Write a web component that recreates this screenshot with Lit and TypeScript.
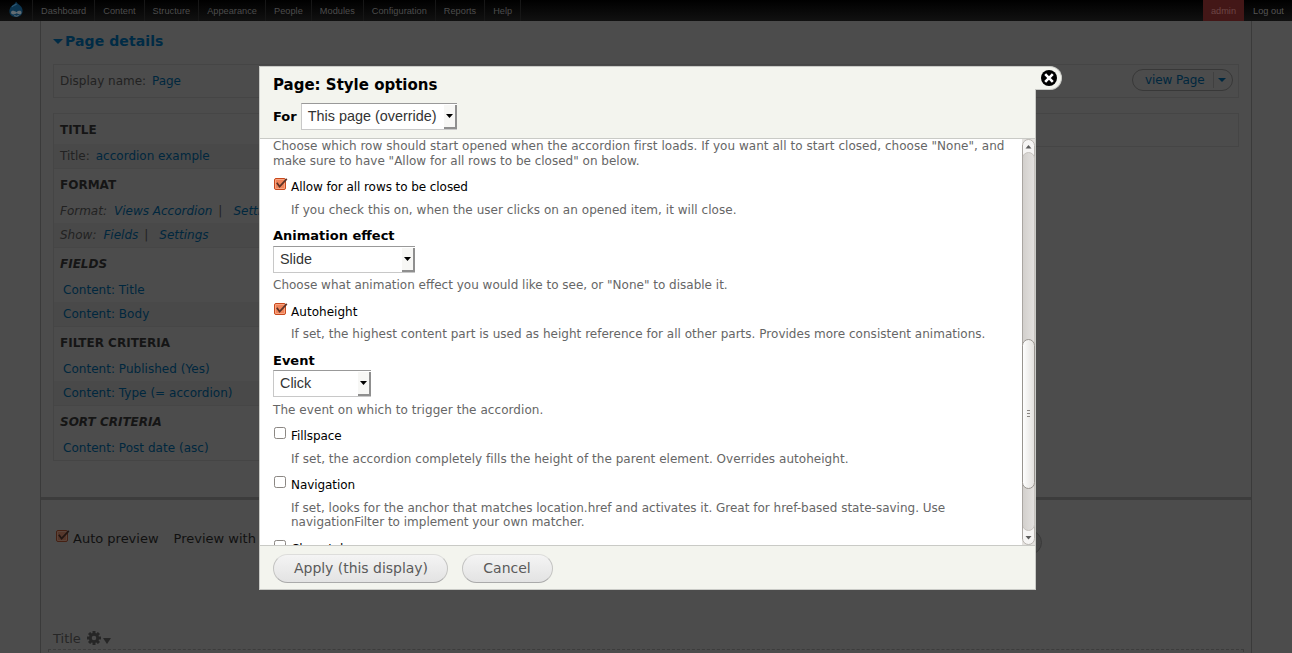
import { LitElement, html, css, svg, nothing } from "lit";
import { customElement, property } from "lit/decorators.js";

const NAV = ["Dashboard", "Content", "Structure", "Appearance", "People", "Modules", "Configuration", "Reports", "Help"];

type Row = { label?: string; links: string[]; zebra?: boolean; changed?: boolean };
type Bucket = { title: string; changed?: boolean; rows: Row[] };

const BUCKETS: Bucket[] = [
  { title: "TITLE", rows: [{ label: "Title:", links: ["accordion example"], zebra: true }] },
  {
    title: "FORMAT",
    rows: [
      { label: "Format:", links: ["Views Accordion", "Settings"], changed: true },
      { label: "Show:", links: ["Fields", "Settings"], zebra: true, changed: true },
    ],
  },
  { title: "FIELDS", changed: true, rows: [{ links: ["Content: Title"] }, { links: ["Content: Body"], zebra: true }] },
  { title: "FILTER CRITERIA", rows: [{ links: ["Content: Published (Yes)"] }, { links: ["Content: Type (= accordion)"], zebra: true }] },
  { title: "SORT CRITERIA", changed: true, rows: [{ links: ["Content: Post date (asc)"] }] },
];

@customElement("check-box")
class CheckBox extends LitElement {
  @property({ type: Boolean }) checked = false;
  static styles = css`
    :host { display: block; width: 15px; height: 13px; flex: none; }
    svg { display: block; overflow: visible; }
  `;
  render() {
    return html`<svg width="15" height="13" viewBox="0 0 15 13">
      ${this.checked
        ? svg`<rect x=".5" y=".5" width="11" height="11" rx="1.5" fill="#f0845a" stroke="#c8481c"/>
            <rect x="1.5" y="1.5" width="9" height="9" rx=".5" fill="none" stroke="#f9a582" stroke-width="1"/>
            <path d="M2.8 4.8L5.6 8.6L12.8 .8" fill="none" stroke="#5d3428" stroke-width="1.7"/>`
        : svg`<rect x=".5" y=".5" width="11" height="11" rx="1.8" fill="#fff" stroke="#8b8783"/>`}
    </svg>`;
  }
}

@customElement("select-box")
class SelectBox extends LitElement {
  @property() value = "";
  static styles = css`
    :host {
      display: flex; box-sizing: border-box; height: 27px; background: #fff;
      border: 1px solid #c8c8c8; border-top-color: #999; border-right: 0;
      font: 14.4px/25px "Liberation Sans", Arial, sans-serif; color: #333;
    }
    .value { flex: 1; padding-left: 6px; white-space: nowrap; }
    .drop {
      box-sizing: border-box; width: 13px; height: 24px; margin-top: 1px; background: #f7f7f5;
      border-right: 2px solid #8f8f8f; border-bottom: 2px solid #8f8f8f; display: flex;
      justify-content: center; padding-top: 9px;
    }
    svg { display: block; }
  `;
  render() {
    return html`<span class="value">${this.value}</span>
      <span class="drop"><svg width="7" height="4"><path d="M0 0H7L3.5 4Z" fill="#000"/></svg></span>`;
  }
}

@customElement("scroll-bar")
class ScrollBar extends LitElement {
  static styles = css`
    :host { display: block; width: 13px; height: 406px; flex: none; }
    svg { display: block; }
  `;
  render() {
    return html`<svg width="13" height="406" viewBox="0 0 13 406">
      <defs>
        <linearGradient id="track"><stop offset="0" stop-color="#d2cfcc"/><stop offset="1" stop-color="#e4e2e0"/></linearGradient>
        <linearGradient id="thumb"><stop offset="0" stop-color="#fff"/><stop offset="1" stop-color="#e2e0dd"/></linearGradient>
      </defs>
      <rect width="13" height="406" fill="#e4e2df"/>
      <rect x=".5" y=".5" width="12" height="405" rx="6" fill="#f6f5f4" stroke="#b9b5b1"/>
      <rect x=".5" y="13.5" width="12" height="378" rx="6" fill="url(#track)" stroke="#c6c2be"/>
      <path d="M.5 6V400" stroke="#aaa6a2"/>
      <rect x=".5" y="200.500" width="12" height="149" rx="6" fill="url(#thumb)" stroke="#98948f"/>
      <path d="M5 271.500H8M5 274.500H8M5 277.500H8" stroke="#8a8682"/>
      <path d="M3.500 9.500H9.500L6.500 6Z" fill="#5c5c5c"/>
      <path d="M3.500 397H9.500L6.500 400.500Z" fill="#5c5c5c"/>
    </svg>`;
  }
}

@customElement("app-root")
class AppRoot extends LitElement {
  static styles = css`
    :host {
      display: block; position: relative; width: 1292px; height: 653px; overflow: hidden;
      background: #4c4c4c; font: 12px/15px "DejaVu Sans", sans-serif; color: #222; white-space: nowrap;
    }
    * { box-sizing: border-box; }
    .toolbar {
      display: flex; height: 21px; background: linear-gradient(#000, #111);
      font: 9.2px/22px "Liberation Sans", Arial, sans-serif; color: #4d4d4d; letter-spacing: .03px;
    }
    .home { width: 33px; padding: 1px 0 0 8px; border-right: 1px solid #161616; }
    .home svg { display: block; }
    .tab { padding: 0 8px; border-right: 1px solid #161616; }
    .spacer { flex: 1; }
    .user { width: 41px; text-align: center; background: #431717; color: #6d4646; }
    .logout { width: 48px; padding-left: 9px; color: #555; }
    .page {
      margin: 0 40px; height: 632px; border: 1px solid #3a3a3a; border-width: 0 1px;
      display: flex; flex-direction: column; width: 1212px;
    }
    .details { height: 476px; padding: 11px 12px 0; }
    .summary { display: flex; align-items: center; height: 18px; font-weight: bold; font-size: 14px; color: #002b45; letter-spacing: .1px; }
    .summary svg { margin-right: 2px; }
    .link { color: #00273e; }
    .display {
      display: flex; justify-content: space-between; margin-top: 14px; width: 1186px; height: 34px;
      border: 1px solid #454545; padding: 4px 5px 0 6px; line-height: 24px;
    }
    .display .link { margin-left: 2px; }
    .view {
      display: flex; width: 101px; height: 22px; border: 1px solid #383838; border-radius: 11px;
      padding-left: 12px; line-height: 21px; color: #00273e; letter-spacing: -.1px;
    }
    .view .caret { margin: 2px 0 0 auto; width: 19px; height: 16px; border-left: 1px solid #404040; padding: 6px 0 0 4px; }
    .view svg { display: block; }
    .columns { display: grid; grid-template-columns: 1fr 1fr 1fr; gap: 14px; width: 1186px; margin-top: 15px; align-items: start; }
    .column { border: 1px solid #454545; border-top: 0; }
    .column.blank { height: 34px; border-top: 1px solid #454545; }
    .bucket-title { height: 31px; padding: 2px 6px 0; border-top: 1px solid #464646; line-height: 28px; font-weight: bold; color: #151515; }
    .row { height: 24px; line-height: 24px; padding: 0 6px; display: flex; }
    .row.plain { padding-left: 9px; letter-spacing: .03px; }
    .zebra { background: #494949; }
    .changed { font-style: italic; }
    .row .name { margin-right: 6px; }
    .row.changed .name { margin-right: 7px; }
    .bar { margin: 0 11px 0 6px; }
    .preview { border-top: 3px solid #3c3c3c; height: 156px; padding: 30px 7px 0; }
    .options { display: flex; height: 25px; line-height: 18px; font-size: 13px; color: #111; padding-left: 8px; }
    .options check-box { filter: brightness(.4) saturate(.7); margin: 0 2px 0 0; }
    .options .with { margin-left: 15px; }
    .update { margin-left: auto; margin-right: 202px; width: 128px; border: 1px solid #3a3a3a; border-radius: 13px; background: #464646; }
    .view-title { display: flex; margin-top: 75px; height: 18px; line-height: 18px; font-size: 13px; color: #262626; padding-left: 5px; }
    .gear { margin: 1px 0 0 6px; }
    .more { margin: 8px 0 0 2px; }
    .region { height: 20px; margin-top: 1px; border: 1px dashed #3c3c3c; width: 1196px; }
    .dialog {
      position: absolute; left: 259px; top: 66px; width: 777px; height: 524px; background: #fff;
      border: 1px solid #c9cac6; display: flex; flex-direction: column; color: #000;
    }
    .close {
      position: absolute; left: 1035px; top: 66px; width: 27px; height: 24px; background: #f3f4ee;
      border: 1px solid #c9cac6; border-left: 0; border-radius: 0 12px 12px 0; padding: 3px 0 0 6px;
    }
    .close svg { display: block; }
    .head { height: 72px; flex: none; background: #f3f4ee; border-bottom: 1px solid #c9cac6; padding: 8px 13px 0; }
    .title { font-size: 15px; line-height: 20px; font-weight: bold; }
    .for { display: flex; margin-top: 8px; font-size: 13px; line-height: 27px; font-weight: bold; }
    .for select-box { width: 156px; margin-left: 4px; }
    .scroll { height: 406px; flex: none; display: flex; overflow: hidden; }
    .form { flex: 1; padding-left: 13px; }
    .desc { line-height: 15px; color: #666; }
    .wide { letter-spacing: .04px; }
    .item { margin-top: 10px; }
    .item .label { display: flex; height: 16px; line-height: 16px; letter-spacing: -.07px; }
    .item .label check-box { margin: -1px 2px 0 1px; }
    .item .desc { margin: 8px 0 0 18px; }
    .pick { margin-top: 10px; }
    .pick .label { height: 18px; font-size: 13px; line-height: 16px; font-weight: bold; }
    .pick .desc { margin-top: 5px; }
    .tight .item, .tight .pick { margin-top: 11px; }
    .tight .item .label { letter-spacing: .04px; }
    .tight .item .desc { margin-top: 7px; letter-spacing: .02px; }
    .tight .pick .label { height: 17px; }
    .tight .pick .desc { margin-top: 6px; letter-spacing: .06px; }
    .two-lines .item .desc { line-height: 14px; height: 30px; }
    .w-slide { width: 142px; }
    .w-click { width: 98px; }
    .foot { flex: 1; background: #f3f4ee; border-top: 1px solid #c9cac6; padding: 8px 13px 0; display: flex; gap: 14px; }
    .btn {
      height: 29px; border: 1px solid; border-color: #dddddb #c4c4c2 #aaa #c4c4c2; border-radius: 15px;
      background: linear-gradient(#f4f4f4, #e3e3e3); font-size: 14px; line-height: 27px; color: #5a5a5a; text-align: center;
    }
    .apply { width: 175px; padding-left: 1px; letter-spacing: -.03px; }
    .cancel { width: 91px; padding-right: 1px; }
  `;

  row(r: Row) {
    return html`<div class="row ${r.zebra ? "zebra" : ""} ${r.changed ? "changed" : ""} ${r.label ? "" : "plain"}">
      ${r.label ? html`<span class="name">${r.label}</span>` : nothing}
      ${r.links.map((l, i) => html`${i ? html`<span class="bar">|</span>` : nothing}<span class="link">${l}</span>`)}
    </div>`;
  }

  item(label: string, checked: boolean, desc: unknown, wide = false) {
    return html`<div class="item">
      <div class="label"><check-box ?checked=${checked}></check-box><span>${label}</span></div>
      <div class="desc ${wide ? "wide" : ""}">${desc}</div>
    </div>`;
  }

  render() {
    const teeth = [0, 45, 90, 135, 180, 225, 270, 315];
    return html`
      <div class="toolbar">
        <div class="home">
          <svg width="16" height="17" viewBox="0 0 16 17">
            <path d="M8 .5C9 2.600 11.200 3.300 12.800 5.200C16.400 9.500 14.500 15.900 8 16C1.500 15.900 -.4 9.800 3.200 5.500C4.900 3.500 7.600 3 8 .5Z" fill="#0c3550"/>
            <path d="M4 5.800C5.600 4.200 7.500 4 8.500 3" stroke="#2f5a76" stroke-width="1.200" fill="none"/>
            <path d="M3 11.500C3 9 6.500 9.500 8.500 11.200C10.500 9.300 13.500 9.200 13.500 11.600C13.500 14.200 10.700 13.500 8.700 12.300C6.700 13.800 3 14 3 11.500Z" fill="#626c72"/>
            <path d="M6.200 14.600Q8.600 15.900 10.700 14.500" stroke="#626c72" fill="none"/>
          </svg>
        </div>
        ${NAV.map((n) => html`<span class="tab">${n}</span>`)}
        <span class="spacer"></span><span class="user">admin</span><span class="logout">Log out</span>
      </div>
      <div class="page">
        <div class="details">
          <div class="summary"><svg width="10" height="5"><path d="M0 0H10L5 5Z" fill="#002b45"/></svg>Page details</div>
          <div class="display">
            <div>Display name: <span class="link">Page</span></div>
            <div class="view">view Page<span class="caret"><svg width="8" height="4"><path d="M0 0H8L4 4Z" fill="#00273e"/></svg></span></div>
          </div>
          <div class="columns">
            <div class="column">
              ${BUCKETS.map((b) => html`<div class="bucket-title ${b.changed ? "changed" : ""}">${b.title}</div>${b.rows.map((r) => this.row(r))}`)}
            </div>
            <div class="column blank"></div>
            <div class="column blank"></div>
          </div>
        </div>
        <div class="preview">
          <div class="options"><check-box checked></check-box><span>Auto preview</span><span class="with">Preview with</span><span class="update"></span></div>
          <div class="view-title">Title
            <svg class="gear" width="14" height="14" viewBox="-7 -7 14 14">
              ${teeth.map((a) => svg`<rect x="-1.500" y="-7" width="3" height="4" fill="#262626" transform="rotate(${a})"/>`)}
              <circle r="3.700" fill="none" stroke="#262626" stroke-width="2.800"/>
            </svg>
            <svg class="more" width="8" height="6"><path d="M0 0H8L4 6Z" fill="#262626"/></svg>
          </div>
          <div class="region"></div>
        </div>
      </div>
      <div class="dialog">
        <div class="head">
          <div class="title">Page: Style options</div>
          <div class="for">For<select-box value="This page (override)"></select-box></div>
        </div>
        <div class="scroll">
          <div class="form">
            <div class="desc"><span class="wide">Choose which row should start opened when the accordion first loads. If you want all to start closed, choose "None", and</span><br>make sure to have "Allow for all rows to be closed" on below.</div>
            ${this.item("Allow for all rows to be closed", true, "If you check this on, when the user clicks on an opened item, it will close.", true)}
            <div class="pick"><div class="label">Animation effect</div><select-box class="w-slide" value="Slide"></select-box>
              <div class="desc">Choose what animation effect you would like to see, or "None" to disable it.</div></div>
            <div class="tight">
              ${this.item("Autoheight", true, "If set, the highest content part is used as height reference for all other parts. Provides more consistent animations.")}
              <div class="pick"><div class="label">Event</div><select-box class="w-click" value="Click"></select-box>
                <div class="desc">The event on which to trigger the accordion.</div></div>
            </div>
            ${this.item("Fillspace", false, "If set, the accordion completely fills the height of the parent element. Overrides autoheight.", true)}
            <div class="two-lines">
              ${this.item("Navigation", false, html`If set, looks for the anchor that matches location.href and activates it. Great for href-based state-saving. Use<br>navigationFilter to implement your own matcher.`)}
            </div>
            ${this.item("Clearstyle", false, "")}
          </div>
          <scroll-bar></scroll-bar>
        </div>
        <div class="foot"><div class="btn apply">Apply (this display)</div><div class="btn cancel">Cancel</div></div>
      </div>
      <div class="close">
        <svg width="16" height="16" viewBox="0 0 16 16"><circle cx="8" cy="8" r="8" fill="#000"/><path d="M4.200 4.200L11.800 11.800M11.800 4.200L4.200 11.800" stroke="#fff" stroke-width="2.600"/></svg>
      </div>
    `;
  }
}
